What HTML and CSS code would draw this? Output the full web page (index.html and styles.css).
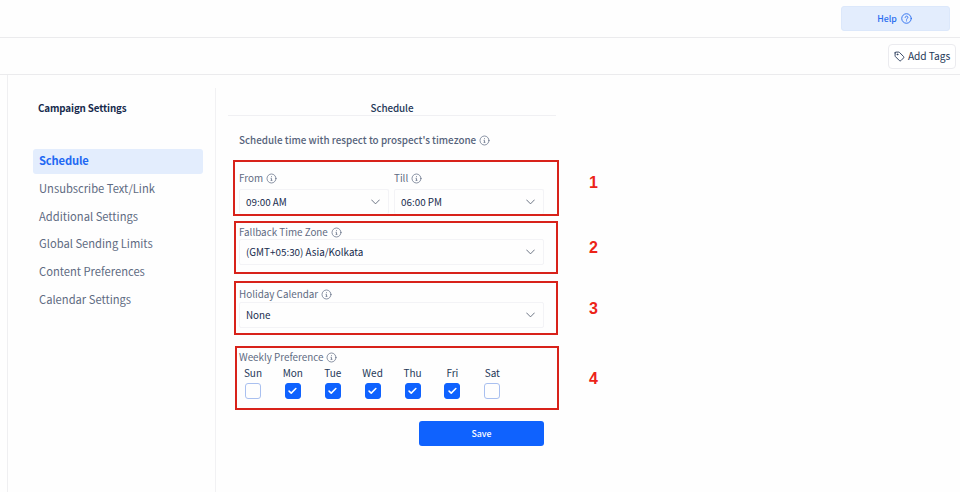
FILE: index.html
```html
<!DOCTYPE html>
<html lang="en">
<head>
    <meta charset="UTF-8">
    <meta name="viewport" content="width=device-width, initial-scale=1.0">
    <title>Campaign Settings</title>
    <link rel="stylesheet" href="styles.css">
</head>
<body>

    <!-- Shared icons -->
    <svg class="sprite" width="0" height="0">
        <symbol id="info" viewBox="0 0 12 12">
            <circle cx="6" cy="6" r="4.9"/>
            <path d="M5.4 5.800H6v2M5.400 8h1.2M6 3.900v.2"/>
        </symbol>
        <symbol id="chevron" viewBox="0 0 10 6">
            <path d="M.7.7L5 5.1 9.3.7"/>
        </symbol>
        <symbol id="check" viewBox="0 0 10 8">
            <path d="M1.2 4.1l2.4 2.3L8.7 1.3"/>
        </symbol>
    </svg>

    <header class="topbar">
        <button class="help">Help
            <svg viewBox="0 0 12 12">
                <circle cx="6" cy="6" r="5.2"/>
                <path d="M4.5 4.8c0-1.900 3-1.900 3 0C7.500 5.900 6 5.900 6 6.900M6 8.500v.2"/>
            </svg>
        </button>
    </header>
    <div class="toolbar">
        <button class="add-tags">
            <svg viewBox="0 0 12 12">
                <path d="M1.2 2v3.3c0 .3.1.6.3.8l4.4 4.4c.5.5 1.1.5 1.6 0l2.9-2.9c.5-.5.5-1.1 0-1.6L6 1.6a1.200 1.200 0 0 0-.8-.4H2a.8.8 0 0 0-.8.8z"/>
                <circle cx="3.700" cy="3.700" r=".5"/>
            </svg>
            Add Tags
        </button>
    </div>

    <div class="page">
        <nav class="sidebar">
            <h1>Campaign Settings</h1>
            <ul>
                <li class="active">Schedule</li>
                <li>Unsubscribe Text/Link</li>
                <li>Additional Settings</li>
                <li>Global Sending Limits</li>
                <li>Content Preferences</li>
                <li>Calendar Settings</li>
            </ul>
        </nav>

        <main class="content">
            <h2>Schedule</h2>
            <p class="intro"><span>Schedule time with respect to prospect's timezone</span> <svg class="info"><use href="#info"/></svg></p>

            <div class="row row-time">
                <section class="box">
                    <div class="field">
                        <div class="label"><span>From</span> <svg class="info"><use href="#info"/></svg></div>
                        <div class="select">09:00 AM <svg><use href="#chevron"/></svg></div>
                    </div>
                    <div class="field">
                        <div class="label"><span>Till</span> <svg class="info"><use href="#info"/></svg></div>
                        <div class="select">06:00 PM <svg><use href="#chevron"/></svg></div>
                    </div>
                </section>
                <span class="number">1</span>
            </div>

            <div class="row row-zone">
                <section class="box">
                    <div class="field">
                        <div class="label"><span>Fallback Time Zone</span> <svg class="info"><use href="#info"/></svg></div>
                        <div class="select">(GMT+05:30) Asia/Kolkata <svg><use href="#chevron"/></svg></div>
                    </div>
                </section>
                <span class="number">2</span>
            </div>

            <div class="row row-holiday">
                <section class="box">
                    <div class="field">
                        <div class="label"><span>Holiday Calendar</span> <svg class="info"><use href="#info"/></svg></div>
                        <div class="select">None <svg><use href="#chevron"/></svg></div>
                    </div>
                </section>
                <span class="number">3</span>
            </div>

            <div class="row row-week">
                <section class="box">
                    <div class="label"><span>Weekly Preference</span> <svg class="info"><use href="#info"/></svg></div>
                    <div class="days">
                        <div class="day">Sun<i></i></div>
                        <div class="day on">Mon<i><svg><use href="#check"/></svg></i></div>
                        <div class="day on">Tue<i><svg><use href="#check"/></svg></i></div>
                        <div class="day on">Wed<i><svg><use href="#check"/></svg></i></div>
                        <div class="day on">Thu<i><svg><use href="#check"/></svg></i></div>
                        <div class="day on">Fri<i><svg><use href="#check"/></svg></i></div>
                        <div class="day">Sat<i></i></div>
                    </div>
                </section>
                <span class="number">4</span>
            </div>

            <button class="save">Save</button>
        </main>
    </div>

</body>
</html>
```
FILE: styles.css
```css
* {
    box-sizing: border-box;
}
body {
    margin: 0;
    height: 492px;
    overflow: hidden;
    background: #fefefe;
    color: #253858;
    font-family: "Noto Sans CJK SC", "Open Sans", sans-serif;
    font-size: 10px;
    line-height: 14px;
}
h1, h2, p, ul {
    margin: 0;
    padding: 0;
}
button {
    font: inherit;
    display: flex;
    align-items: center;
    justify-content: center;
    padding: 0;
}
svg {
    fill: none;
    stroke: currentColor;
    stroke-linecap: round;
    stroke-linejoin: round;
    flex: none;
}
.sprite {
    display: block;
    position: absolute;
}
/* Top bars */
.topbar {
    display: flex;
    justify-content: flex-end;
    height: 38px;
    padding: 6px 10px 0 0;
    border-bottom: 1px solid #ebebed;
}
.help {
    gap: 4px;
    width: 109px;
    height: 25px;
    padding-right: 2px;
    border: 1px solid #dce8fb;
    border-radius: 3px;
    background: #e3edfd;
    color: #2a6df0;
    font-size: 8.8px;
    font-weight: 500;
    letter-spacing: -.1px;
}
.help svg {
    width: 11px;
    height: 11px;
}
.toolbar {
    display: flex;
    justify-content: flex-end;
    height: 37px;
    padding: 6px 4px 0 0;
    border-bottom: 1px solid #ebebed;
}
.add-tags {
    gap: 3px;
    width: 68px;
    height: 25px;
    padding-bottom: 1px;
    border: 1px solid #ebebef;
    border-radius: 4px;
    background: #fff;
    color: #253858;
    font-size: 10.2px;
    letter-spacing: -.05px;
    white-space: nowrap;
}
.add-tags svg {
    width: 11px;
    height: 11px;
}
/* Page */
.page {
    display: flex;
    height: 417px;
    margin-left: 7px;
    border-left: 1px solid #efeff1;
}
.sidebar {
    width: 208px;
    margin-top: 13px;
    padding: 13px 12px 0 25px;
    border-right: 1px solid #f1f1f3;
}
.sidebar h1 {
    padding-left: 5px;
    font-size: 9.8px;
    letter-spacing: -.12px;
    line-height: 14px;
    color: #172b4d;
}
.sidebar ul {
    margin-top: 34px;
    list-style: none;
}
.sidebar li {
    height: 25px;
    margin-bottom: 2.8px;
    padding-left: 6px;
    border-radius: 3px;
    font-size: 11.2px;
    line-height: 22.6px;
    color: #5e6b82;
}
.sidebar .active {
    background: #e3edfd;
    color: #2168f3;
    font-weight: bold;
    letter-spacing: -.15px;
}
.content {
    padding: 27px 0 0 12px;
}
.content h2 {
    width: 328px;
    height: 14px;
    border-bottom: 1px solid #f0f0f3;
    font-size: 9.9px;
    font-weight: 500;
    line-height: 13px;
    letter-spacing: -.1px;
    text-align: center;
}
.intro {
    display: flex;
    align-items: center;
    gap: 3px;
    height: 14px;
    margin: 17px 0 0 11px;
    font-size: 9.85px;
    font-weight: 500;
    color: #56637b;
}
.info {
    width: 11px;
    height: 11px;
    stroke-width: .8px;
    color: #5e6b82;
}
/* Numbered settings blocks */
.row {
    display: flex;
}
.box {
    border: 2px solid #d8221a;
}
.number {
    font: bold 16px/18px "Liberation Sans", sans-serif;
    color: #ec2318;
}
.label {
    display: flex;
    align-items: center;
    gap: 3px;
    height: 14px;
    font-size: 9.85px;
    color: #5e6b82;
}
.select {
    display: flex;
    align-items: center;
    justify-content: space-between;
    height: 26px;
    padding: 0 8px 0 6px;
    border: 1px solid #f3f3f6;
    border-radius: 2px;
    font-size: 9.85px;
    color: #172b4d;
}
.select svg {
    width: 9px;
    height: 6px;
    color: #5f6878;
}
.row-time {
    margin: 13px 0 0 5px;
}
.row-time .box {
    display: flex;
    gap: 5px;
    width: 326px;
    height: 56px;
    padding: 9px 0 0 4px;
}
.row-time .field {
    width: 150px;
}
.row-time .select {
    height: 25px;
    margin-top: 4px;
    border-bottom: 0;
}
.row-time .number {
    margin: 14px 0 0 30px;
}
.row-zone {
    margin: 5px 0 0 6px;
}
.row-zone .box {
    width: 324px;
    height: 53px;
    padding: 2px 12px 0 3px;
}
.row-zone .number {
    margin: 18px 0 0 31px;
}
.row-holiday {
    margin: 7px 0 0 6px;
}
.row-holiday .box {
    width: 324px;
    height: 54px;
    padding: 4px 12px 0 3px;
}
.row-holiday .select {
    margin-top: 1px;
}
.row-holiday .number {
    margin: 19px 0 0 31px;
}
.row-week {
    margin: 11px 0 0 7px;
}
.row-week .box {
    width: 324px;
    height: 64px;
    padding: 2px 0 0 2px;
}
.row-week .number {
    margin: 24px 0 0 30px;
}
.days {
    display: flex;
    margin: 2px 0 0 -6px;
}
.day {
    display: flex;
    flex-direction: column;
    align-items: center;
    gap: 3px;
    width: 39.9px;
}
.day i {
    display: flex;
    align-items: center;
    justify-content: center;
    width: 16px;
    height: 16px;
    border: 1px solid #a9c0f0;
    border-radius: 3px;
}
.day.on i {
    border-color: #0f62fe;
    background: #0f62fe;
    color: #fff;
}
.day svg {
    width: 9px;
    height: 8px;
    stroke-width: 1.7px;
}
.save {
    width: 125px;
    height: 25px;
    margin: 11px 0 0 191px;
    border: 0;
    border-radius: 3px;
    background: #0f62fe;
    color: #fff;
    font-size: 8.8px;
    font-weight: 500;
}
```
